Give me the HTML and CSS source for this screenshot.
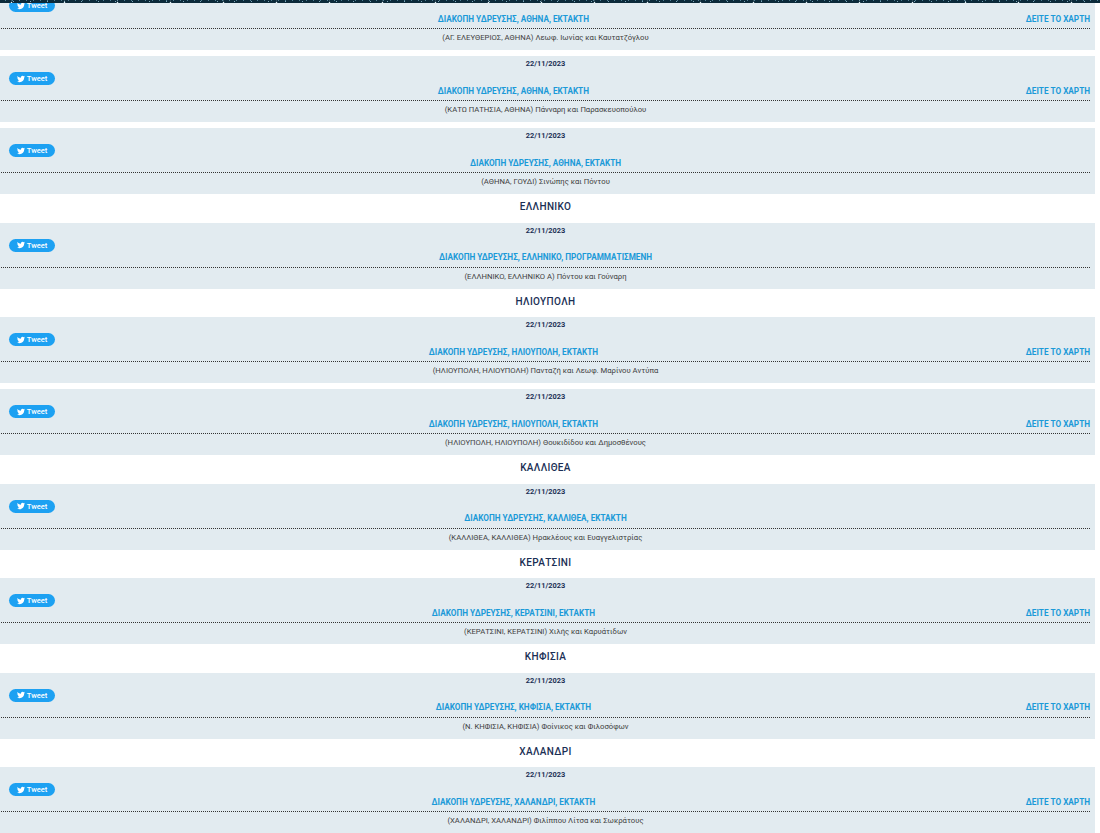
FILE: index.html
```html
<!DOCTYPE html>
<html lang="el">
<head>
<meta charset="utf-8">
<title>Διακοπές ύδρευσης</title>
<link rel="stylesheet" href="styles.css">
</head>
<body>
<svg class="sprite" width="0" height="0"><defs><symbol id="bird" viewBox="0 0 24 24"><path d="M23.95 4.57a10 10 0 0 1-2.82.77 4.96 4.96 0 0 0 2.16-2.72c-.95.56-2 .96-3.12 1.19a4.92 4.92 0 0 0-8.38 4.48C7.69 8.1 4.07 6.13 1.64 3.16a4.82 4.82 0 0 0-.67 2.48c0 1.71.87 3.21 2.19 4.1a4.9 4.9 0 0 1-2.23-.62v.06a4.92 4.92 0 0 0 3.95 4.83 5 5 0 0 1-2.21.08 4.94 4.94 0 0 0 4.6 3.42A9.87 9.87 0 0 1 0 19.54a14 14 0 0 0 7.56 2.21c9.05 0 14-7.5 14-13.98 0-.21 0-.42-.02-.63a9.94 9.94 0 0 0 2.41-2.57z"/></symbol></defs></svg>
<div class="banner"></div>
<main class="list">
  <article class="row first">
    <a class="tweet"><svg class="bird"><use href="#bird"/></svg>Tweet</a>
    <div class="date"></div>
    <div class="head"><a class="title">ΔΙΑΚΟΠΗ ΥΔΡΕΥΣΗΣ, ΑΘΗΝΑ, ΕΚΤΑΚΤΗ</a><a class="map">ΔΕΙΤΕ ΤΟ ΧΑΡΤΗ</a></div>
    <div class="addr">(ΑΓ. ΕΛΕΥΘΕΡΙΟΣ, ΑΘΗΝΑ) Λεωφ. Ιωνίας και Καυτατζόγλου</div>
  </article>
  <article class="row">
    <a class="tweet"><svg class="bird"><use href="#bird"/></svg>Tweet</a>
    <div class="date">22/11/2023</div>
    <div class="head"><a class="title">ΔΙΑΚΟΠΗ ΥΔΡΕΥΣΗΣ, ΑΘΗΝΑ, ΕΚΤΑΚΤΗ</a><a class="map">ΔΕΙΤΕ ΤΟ ΧΑΡΤΗ</a></div>
    <div class="addr">(ΚΑΤΩ ΠΑΤΗΣΙΑ, ΑΘΗΝΑ) Πάνναρη και Παρασκευοπούλου</div>
  </article>
  <article class="row">
    <a class="tweet"><svg class="bird"><use href="#bird"/></svg>Tweet</a>
    <div class="date">22/11/2023</div>
    <div class="head"><a class="title">ΔΙΑΚΟΠΗ ΥΔΡΕΥΣΗΣ, ΑΘΗΝΑ, ΕΚΤΑΚΤΗ</a></div>
    <div class="addr">(ΑΘΗΝΑ, ΓΟΥΔΙ) Σινώπης και Πόντου</div>
  </article>
  <h2 class="area">ΕΛΛΗΝΙΚΟ</h2>
  <article class="row">
    <a class="tweet"><svg class="bird"><use href="#bird"/></svg>Tweet</a>
    <div class="date">22/11/2023</div>
    <div class="head"><a class="title">ΔΙΑΚΟΠΗ ΥΔΡΕΥΣΗΣ, ΕΛΛΗΝΙΚΟ, ΠΡΟΓΡΑΜΜΑΤΙΣΜΕΝΗ</a></div>
    <div class="addr">(ΕΛΛΗΝΙΚΟ, ΕΛΛΗΝΙΚΟ Α) Πόντου και Γούναρη</div>
  </article>
  <h2 class="area">ΗΛΙΟΥΠΟΛΗ</h2>
  <article class="row">
    <a class="tweet"><svg class="bird"><use href="#bird"/></svg>Tweet</a>
    <div class="date">22/11/2023</div>
    <div class="head"><a class="title">ΔΙΑΚΟΠΗ ΥΔΡΕΥΣΗΣ, ΗΛΙΟΥΠΟΛΗ, ΕΚΤΑΚΤΗ</a><a class="map">ΔΕΙΤΕ ΤΟ ΧΑΡΤΗ</a></div>
    <div class="addr">(ΗΛΙΟΥΠΟΛΗ, ΗΛΙΟΥΠΟΛΗ) Πανταζή και Λεωφ. Μαρίνου Αντύπα</div>
  </article>
  <article class="row">
    <a class="tweet"><svg class="bird"><use href="#bird"/></svg>Tweet</a>
    <div class="date">22/11/2023</div>
    <div class="head"><a class="title">ΔΙΑΚΟΠΗ ΥΔΡΕΥΣΗΣ, ΗΛΙΟΥΠΟΛΗ, ΕΚΤΑΚΤΗ</a><a class="map">ΔΕΙΤΕ ΤΟ ΧΑΡΤΗ</a></div>
    <div class="addr">(ΗΛΙΟΥΠΟΛΗ, ΗΛΙΟΥΠΟΛΗ) Θουκιδίδου και Δημοσθένους</div>
  </article>
  <h2 class="area">ΚΑΛΛΙΘΕΑ</h2>
  <article class="row">
    <a class="tweet"><svg class="bird"><use href="#bird"/></svg>Tweet</a>
    <div class="date">22/11/2023</div>
    <div class="head"><a class="title">ΔΙΑΚΟΠΗ ΥΔΡΕΥΣΗΣ, ΚΑΛΛΙΘΕΑ, ΕΚΤΑΚΤΗ</a></div>
    <div class="addr">(ΚΑΛΛΙΘΕΑ, ΚΑΛΛΙΘΕΑ) Ηρακλέους και Ευαγγελιστρίας</div>
  </article>
  <h2 class="area">ΚΕΡΑΤΣΙΝΙ</h2>
  <article class="row">
    <a class="tweet"><svg class="bird"><use href="#bird"/></svg>Tweet</a>
    <div class="date">22/11/2023</div>
    <div class="head"><a class="title">ΔΙΑΚΟΠΗ ΥΔΡΕΥΣΗΣ, ΚΕΡΑΤΣΙΝΙ, ΕΚΤΑΚΤΗ</a><a class="map">ΔΕΙΤΕ ΤΟ ΧΑΡΤΗ</a></div>
    <div class="addr">(ΚΕΡΑΤΣΙΝΙ, ΚΕΡΑΤΣΙΝΙ) Χιλής και Καρυάτιδων</div>
  </article>
  <h2 class="area">ΚΗΦΙΣΙΑ</h2>
  <article class="row">
    <a class="tweet"><svg class="bird"><use href="#bird"/></svg>Tweet</a>
    <div class="date">22/11/2023</div>
    <div class="head"><a class="title">ΔΙΑΚΟΠΗ ΥΔΡΕΥΣΗΣ, ΚΗΦΙΣΙΑ, ΕΚΤΑΚΤΗ</a><a class="map">ΔΕΙΤΕ ΤΟ ΧΑΡΤΗ</a></div>
    <div class="addr">(Ν. ΚΗΦΙΣΙΑ, ΚΗΦΙΣΙΑ) Φοίνικος και Φιλοσόφων</div>
  </article>
  <h2 class="area">ΧΑΛΑΝΔΡΙ</h2>
  <article class="row">
    <a class="tweet"><svg class="bird"><use href="#bird"/></svg>Tweet</a>
    <div class="date">22/11/2023</div>
    <div class="head"><a class="title">ΔΙΑΚΟΠΗ ΥΔΡΕΥΣΗΣ, ΧΑΛΑΝΔΡΙ, ΕΚΤΑΚΤΗ</a><a class="map">ΔΕΙΤΕ ΤΟ ΧΑΡΤΗ</a></div>
    <div class="addr">(ΧΑΛΑΝΔΡΙ, ΧΑΛΑΝΔΡΙ) Φιλίππου Λίτσα και Σωκράτους</div>
  </article>
</main>
</body>
</html>
```
FILE: styles.css
```css
html, body {
  margin: 0;
  height: 833px;
  overflow: hidden;
  background: #fff;
  font-family: Roboto, "Noto Sans", sans-serif;
}
.sprite { position: absolute; }
.banner {
  position: absolute;
  top: 0;
  left: 0;
  width: 100%;
  height: 3px;
  z-index: 2;
  background-color: #0b2a3a;
  background-image:
    radial-gradient(circle, #e4f1f6 0, transparent 1.2px),
    radial-gradient(circle, #7fa8bb 0, transparent 1px),
    radial-gradient(circle, #4f7d92 0, transparent 1px);
  background-size: 53px 3px, 17px 3px, 7px 3px;
  background-position: 38px 1px, 5px 0, 2px 2px;
}
.list {
  width: 1095px;
  margin-top: -16px;
  display: flex;
  flex-direction: column;
}
.row {
  position: relative;
  height: 66px;
  margin-bottom: 6px;
  background: #e2ebf0;
  display: flex;
  flex-direction: column;
}
.row:has(+ .area), .row:last-child { margin-bottom: 0; }
.tweet {
  position: absolute;
  left: 9px;
  top: 16px;
  width: 46px;
  height: 13px;
  border-radius: 7px;
  background: #1da1f2;
  color: #fff;
  font: 500 7.5px/13px Roboto, sans-serif;
  display: flex;
  align-items: center;
  justify-content: center;
  gap: 2px;
}
.first .tweet { top: 15px; }
.bird { width: 8px; height: 8px; fill: #fff; }
.date {
  height: 13px;
  margin-top: 1px;
  text-align: center;
  width: 1091px;
  font-size: 7.4px;
  font-weight: 700;
  line-height: 13px;
  color: #1a2f55;
}
.head {
  margin: 11px 5px 0 1px;
  width: 1089px;
  height: 19px;
  padding-bottom: 0;
  display: flex;
  align-items: center;
  border-bottom: 1px dotted #333;
  color: #1b9ad8;
  font-size: 8.2px;
  font-weight: 700;
}
.title { flex: 1; text-align: center; }
.map { white-space: nowrap; }
.addr {
  width: 1091px;
  text-align: center;
  font-size: 7.7px;
  line-height: 18px;
  color: #3f3f3f;
}
.area {
  margin: 0;
  width: 1091px;
  height: 28.5px;
  text-align: center;
  font-size: 10px;
  font-weight: 500;
  letter-spacing: .35px;
  line-height: 26px;
  color: #1a2f55;
}
```
